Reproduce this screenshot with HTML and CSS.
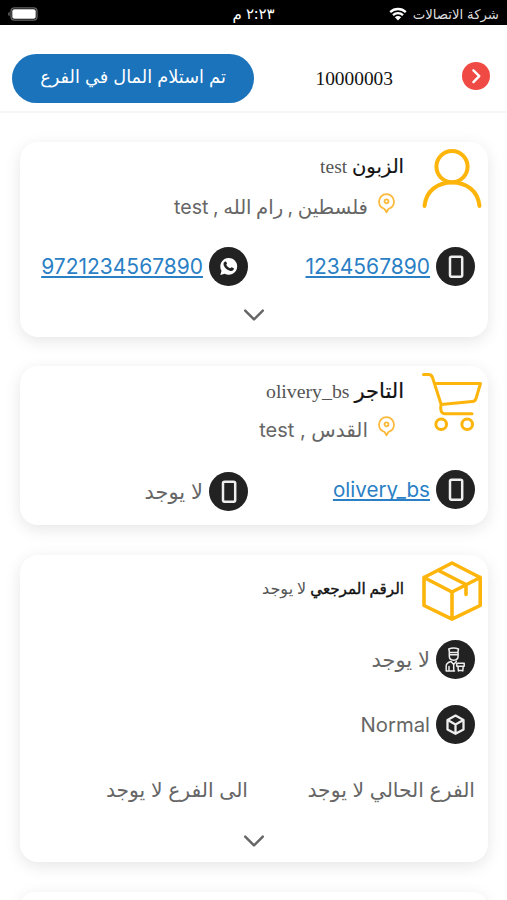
FILE: index.html
```
<!DOCTYPE html>
<html lang="ar" dir="rtl">
<head>
<meta charset="utf-8">
<meta name="viewport" content="width=device-width, initial-scale=1">
<title>10000003</title>
<link rel="stylesheet" href="styles.css">
</head>
<body>
<svg class="defs" aria-hidden="true">
  <symbol id="pin" viewBox="0 0 17 21"><path d="M8.500 19.200 6.600 16C3.400 15 1 12.200 1 8.600a7.500 7.500 0 0 1 15 0c0 3.600-2.400 6.400-5.600 7.400Z"/><circle cx="8.500" cy="8.300" r="2"/></symbol>
  <symbol id="phone" viewBox="0 0 39 39"><rect x="14" y="9.700" width="12.200" height="20" rx="1.600"/></symbol>
  <symbol id="chevron" viewBox="0 0 20 13"><path d="m1.200 1.600 8.800 8.800 8.800-8.800"/></symbol>
</svg>
<div class="status">
  <div class="carrier"><span class="carrier-name">شركة الاتصالات</span>
    <svg class="wifi" viewBox="0 0 18 14"><path d="M1.200 5.100a11.300 11.300 0 0 1 15.600 0M4 8.200a7.300 7.300 0 0 1 10 0"/><path class="solid" d="M5.900 10.200a4.400 4.400 0 0 1 6.200 0L9 13.400Z"/></svg>
  </div>
  <div class="time">٢:٢٣ م</div>
  <svg class="battery" viewBox="0 0 30 14"><rect class="shell" x="3" y=".8" width="26" height="12.400" rx="3.400"/><rect class="charge" x="4.300" y="2.200" width="23.400" height="9.600" rx="2"/><path class="cap" d="M1.600 4.800v4.400Q0 8.500 0 7t1.600-2.200Z"/></svg>
</div>
<header class="topbar">
  <svg class="back" viewBox="0 0 28 28"><circle cx="14" cy="14" r="14"/><path d="m11.400 8.300 5.900 5.900-5.900 5.900"/></svg>
  <div class="order">10000003</div>
  <button class="action"><span>تم استلام المال في الفرع</span></button>
</header>
<main>
  <section class="card customer">
    <div class="head">
      <svg class="art" viewBox="0 0 60 60"><circle cx="30" cy="17.600" r="15.600"/><path d="M2.500 57C4 41.500 16 33.400 30 33.400s26 8.100 27.500 23.600"/></svg>
      <div class="info">
        <h2><b>الزبون</b> <span>test</span></h2>
        <div class="place"><svg class="pin"><use href="#pin"/></svg><span>فلسطين , رام الله , test</span></div>
      </div>
    </div>
    <div class="row">
      <div class="cell"><svg class="dot"><use href="#phone"/></svg><a href="#">1234567890</a></div>
      <div class="cell"><svg class="dot" viewBox="0 0 39 39"><path class="fill" d="M19.700 11a8.400 8.400 0 0 0-7.200 12.700L11.300 28l4.500-1.200A8.400 8.400 0 1 0 19.700 11Z"/><path class="receiver" d="M16.500 14.400c.6 0 1 .5 1.500 2.100.1.500-.8 1-.7 1.400a8 8 0 0 0 3.800 3.300c.5.1 1.100-1.200 1.600-1 1.600.7 2.200 1 2.200 1.300 0 1.700-1.600 2.700-3.300 2.400-3.600-.8-7.200-4.100-7.100-7.200 0-1.200.9-2.300 2-2.300Z"/></svg><a href="#">9721234567890</a></div>
    </div>
    <svg class="chevron"><use href="#chevron"/></svg>
  </section>
  <section class="card merchant">
    <div class="head">
      <svg class="art cart" viewBox="0 0 60 60"><path d="M1.500 1.500h5q3 0 4 3l8.500 26.500M13.500 10.500h45l-4.500 15q-.8 2.800-3.800 3.100L19 31.500q-1.500 8.500 3.500 9.200H50"/><circle cx="19.200" cy="51.200" r="5.300"/><circle cx="45.200" cy="51.200" r="5.300"/></svg>
      <div class="info">
        <h2><b>التاجر</b> <span>olivery_bs</span></h2>
        <div class="place"><svg class="pin"><use href="#pin"/></svg><span>القدس , test</span></div>
      </div>
    </div>
    <div class="row">
      <div class="cell"><svg class="dot"><use href="#phone"/></svg><a href="#">olivery_bs</a></div>
      <div class="cell low"><svg class="dot"><use href="#phone"/></svg><span class="ar">لا يوجد</span></div>
    </div>
  </section>
  <section class="card parcel">
    <div class="head">
      <svg class="art box" viewBox="0 0 60 60"><path d="M30 2 58.200 16.500v28L30 58.200 2 44.500v-28ZM2 16.500l28 14.500 28.200-14.500M30 31v27M16.500 9.500 44 23.500v10"/></svg>
      <div class="info">
        <h2><b>الرقم المرجعي</b> <span>لا يوجد</span></h2>
      </div>
    </div>
    <div class="cell"><svg class="dot" viewBox="0 0 39 39"><path class="thin" d="M12.800 9q4.700-2 9.700 0l-.7 3.500h-8.300ZM13.300 12.500v3.700q0 3.700 4.400 4 4.400-.3 4.400-4v-3.700M13.500 14.800h8.500M10.200 31v-5.200q.2-3.200 4.800-4.400l2.700 3 2.600-3M13 26.500V31M10.200 31h8.300M17.700 24.500V31"/><path class="thin" d="M20.800 23.200h7.400v3h-7.400ZM22 26.500l.4 4.500M27.200 26.500l-.4 4.500M22.400 30.500h4.400"/></svg><span class="ar">لا يوجد</span></div>
    <div class="cell"><svg class="dot" viewBox="0 0 39 39"><path class="cube" d="m19.500 10.600 8 4.300v9.500l-8 4.400-8-4.400v-9.500ZM11.600 15l7.900 4.400 7.900-4.400M19.500 19.400v9"/></svg><span class="kind">Normal</span></div>
    <div class="row branches">
      <div class="cell"><span class="ar">الفرع الحالي لا يوجد</span></div>
      <div class="cell"><span class="ar">الى الفرع لا يوجد</span></div>
    </div>
    <svg class="chevron"><use href="#chevron"/></svg>
  </section>
  <section class="card next"></section>
</main>
</body>
</html>
```
FILE: styles.css
```
* { box-sizing: border-box; }
html, body { margin: 0; height: 900px; overflow: hidden; }
body { background: #fff; color: #666; font-family: Inter, "DejaVu Sans", sans-serif; }
svg { display: block; flex: none; fill: none; stroke-linecap: round; stroke-linejoin: round; }
.defs { position: absolute; width: 0; height: 0; }

.status { display: grid; grid-template-columns: 1fr auto 1fr; align-items: center; height: 25px; padding: 0 8px; background: #000; color: #ddd; font-size: 13.3px; line-height: 25px; }
.carrier { display: flex; align-items: center; gap: 6px; white-space: nowrap; }
.carrier-name { padding-top: 2px; }
.wifi { width: 18px; height: 14px; stroke: #fff; stroke-width: 2.3; stroke-linecap: butt; }
.wifi .solid { fill: #fff; stroke: none; }
.time { color: #fff; font-size: 15px; }
.battery { width: 30px; height: 14px; justify-self: end; }
.shell { stroke: #666; stroke-width: 1.3; }
.charge { fill: #fff; }
.cap { fill: #666; }

.topbar { display: flex; align-items: flex-start; height: 88px; padding: 29px 17px 0 12px; border-bottom: 2px solid #f5f5f5; }
.back { width: 28px; height: 28px; margin-top: 8px; }
.back circle { fill: #ef4a43; }
.back path { stroke: #fff; stroke-width: 2.4; }
.order { margin: 13px 69px 0 auto; font: 19.4px/24px "Liberation Serif", serif; color: #111; width: 77px; white-space: nowrap; }
.action { display: flex; justify-content: center; width: 242px; height: 49px; margin-right: auto; padding: 0; border: 0; border-radius: 25px; background: #1a73bb; color: #fff; font: 17.8px/45px Inter, "DejaVu Sans", sans-serif; white-space: nowrap; }

main { display: flex; flex-direction: column; gap: 29px; height: 787px; padding: 29px 19px 0 20px; overflow: hidden; }
.card { flex: none; border-radius: 18px; background: #fff; box-shadow: 0 4px 16px rgba(0, 0, 0, .1); }
.customer { height: 195px; }
.merchant { height: 159px; margin-bottom: 1px; }
.parcel { height: 307px; margin-bottom: 1px; }
.next { height: 30px; }
.head { display: flex; height: 105px; padding: 7px 6px 0; }
.art { width: 60px; height: 60px; stroke: #fdb50b; stroke-width: 4; }
.cart { stroke-width: 3; }
.box { margin-top: -1px; stroke-width: 3.6; }
.info { padding-right: 18px; }
h2 { margin: 4px 0 0; font: 19.5px/28px "Liberation Serif", "DejaVu Sans", serif; color: #555; white-space: nowrap; }
h2 b { color: #111; font-weight: 400; font-size: 19.5px; -webkit-text-stroke: .2px; }
.merchant h2 { font-size: 19.8px; }
.merchant h2 b { font-size: 21px; }
.place { display: flex; height: 34px; margin-top: 8px; padding-right: 9px; gap: 10px; font-size: 20px; line-height: 34px; white-space: nowrap; }
.customer .place { font-size: 19.6px; line-height: 36px; word-spacing: -1px; }
.pin { width: 17px; height: 21px; margin-top: 4px; stroke: #fdb93a; stroke-width: 1.8; }
.merchant .pin { margin-top: 3px; }
.row { display: grid; grid-template-columns: 227px 227px; padding-right: 13px; }
.cell { display: flex; align-items: center; gap: 6px; height: 39px; font-size: 21px; line-height: 39px; white-space: nowrap; }
.dot { width: 39px; height: 39px; border-radius: 50%; background: #222; stroke: #eee; stroke-width: 2.5; }
.dot .fill { fill: #fff; stroke: none; }
.dot .receiver { fill: #222; stroke: none; }
.dot .thin { stroke-width: 1.5; }
.dot .cube { stroke-width: 2.3; }
.ar { font-size: 21px; }
.kind { font-size: 20.3px; }
a { color: #2a7fc5; text-decoration-thickness: 1.5px; text-underline-offset: 2px; text-decoration-skip-ink: none; }
.merchant a { font-size: 20.6px; }
.chevron { width: 20px; height: 13px; margin: 23px auto 0; stroke: #666; stroke-width: 2.5; }
.low { margin-top: 2px; }
.merchant .row { margin-top: -1px; }
.parcel .head { height: 85px; }
.parcel h2 { margin-top: 13px; font-size: 16px; }
.parcel h2 b { font-size: 15.2px; -webkit-text-stroke: .4px; }
.parcel > .cell { margin: 0 13px 26px 0; }
.branches .ar { font-size: 20.3px; }
.parcel .chevron { margin-top: 26px; }
```
